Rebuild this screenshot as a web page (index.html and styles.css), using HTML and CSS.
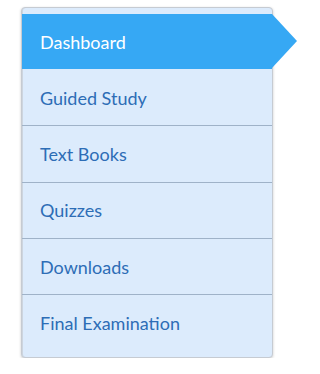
FILE: index.html
```html
<!DOCTYPE html>
<html>
<head>
<meta charset="utf-8">
<link rel="stylesheet" href="styles.css">
</head>
<body>
<nav class="menu">
  <a class="item active">Dashboard</a>
  <a class="item">Guided Study</a>
  <a class="item">Text Books</a>
  <a class="item">Quizzes</a>
  <a class="item">Downloads</a>
  <a class="item last">Final Examination</a>
</nav>
</body>
</html>
```
FILE: styles.css
```css
html, body {
  margin: 0;
  padding: 0;
  background: #ffffff;
}
body {
  padding: 7px 0 0 21px;
  font-family: Lato, "Open Sans", sans-serif;
}
.menu {
  width: 250px;
  border: 1px solid #c6cbd2;
  border-radius: 4px;
  background: #dcebfc;
  padding: 6px 0 5px;
  box-shadow: 0 1px 3px rgba(0, 0, 0, 0.2), inset 1px 0 0 #cdd5df;
  display: flex;
  flex-direction: column;
}
.item {
  display: flex;
  align-items: center;
  box-sizing: border-box;
  height: 56.33px;
  padding-left: 18px;
  font-size: 18px;
  color: #2d6db6;
  border-bottom: 1px solid #9fb2c8;
}
.item.last {
  border-bottom: none;
}
.item.active {
  position: relative;
  height: 55px;
  margin-bottom: 1px;
  background: #36a8f4;
  color: #ffffff;
  border-bottom: none;
}
.item.active::after {
  content: "";
  position: absolute;
  left: 100%;
  top: 0;
  width: 0;
  height: 0;
  border-top: 27.5px solid transparent;
  border-bottom: 27.5px solid transparent;
  border-left: 25px solid #36a8f4;
}
```
